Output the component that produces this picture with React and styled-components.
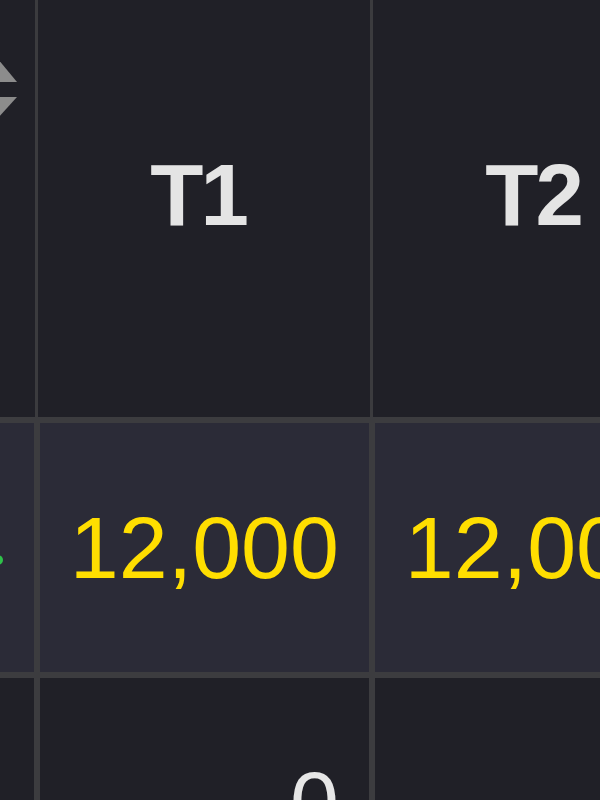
import React from "react";
import styled, { createGlobalStyle } from "styled-components";

const Global = createGlobalStyle`
  html, body {
    margin: 0;
    padding: 0;
    background: #202027;
    overflow: hidden;
  }
  body {
    width: 600px;
    height: 800px;
    font-family: "Liberation Sans", Arial, Helvetica, sans-serif;
  }
`;

const COLS = "200px 335px 335px";

const Viewport = styled.div`
  width: 600px;
  height: 800px;
  overflow: hidden;
  background: #202027;
`;

const Table = styled.div`
  display: flex;
  flex-direction: column;
  width: 870px;
  margin-left: -160px;
`;

const HeaderRow = styled.div`
  display: grid;
  grid-template-columns: ${COLS};
  background: #202027;
  border-bottom: 6px solid #3c3c3f;
`;

const HeaderCell = styled.div`
  box-sizing: border-box;
  height: 417px;
  margin-right: 2px;
  border-right: 3px solid #3b3b3e;
  display: flex;
  justify-content: ${(p) => (p.$sort ? "flex-end" : "center")};
  align-items: flex-start;
  padding-top: ${(p) => (p.$sort ? "56px" : "151px")};
  padding-right: ${(p) => (p.$sort ? "16px" : "14px")};
  color: #e4e4e4;
  font-weight: 700;
  font-size: 87px;
  letter-spacing: -3px;
  line-height: 1;
`;

const BodyRow = styled.div`
  display: grid;
  grid-template-columns: ${COLS};
  background: ${(p) => (p.$highlight ? "#2b2b37" : "#202027")};
`;

const BodyCell = styled.div`
  box-sizing: border-box;
  height: 255px;
  border-right: 6px solid #3c3c3f;
  border-bottom: 6px solid #3c3c3f;
  display: flex;
  align-items: center;
  justify-content: flex-end;
  padding-right: ${(p) => (p.$lead ? "31px" : "30px")};
  color: ${(p) => (p.$accent ? "#ffde00" : "#e6e6e6")};
  font-size: 88px;
  line-height: 1;
  font-weight: 400;
`;

const Dot = styled.span`
  display: block;
  width: 10px;
  height: 10px;
  border-radius: 50%;
  background: #2fc24a;
  margin-top: 25px;
`;

const SortIcon = () => (
  <svg width="44" height="64" viewBox="0 0 44 64" aria-hidden="true">
    <polygon points="22,2 42,26 2,26" fill="#8c8c8c" />
    <polygon points="2,41 42,41 22,63" fill="#8c8c8c" />
  </svg>
);

const rows = [
  { highlight: true, values: ["12,000", "12,000"], accent: true },
  { highlight: false, values: ["0", "0"], accent: false },
];

export default function App() {
  return (
    <>
      <Global />
      <Viewport>
        <Table>
          <HeaderRow>
            <HeaderCell $sort>
              <SortIcon />
            </HeaderCell>
            <HeaderCell>T1</HeaderCell>
            <HeaderCell>T2</HeaderCell>
          </HeaderRow>
          {rows.map((r, i) => (
            <BodyRow key={i} $highlight={r.highlight}>
              <BodyCell $lead>{r.highlight ? <Dot /> : null}</BodyCell>
              {r.values.map((v, j) => (
                <BodyCell key={j} $accent={r.accent}>
                  {v}
                </BodyCell>
              ))}
            </BodyRow>
          ))}
        </Table>
      </Viewport>
    </>
  );
}
